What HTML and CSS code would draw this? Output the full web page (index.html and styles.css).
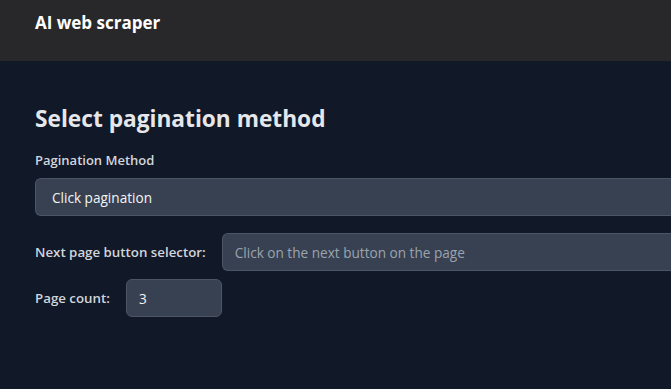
FILE: index.html
```html
<!DOCTYPE html>
<html lang="en">
<head>
<meta charset="utf-8">
<title>AI web scraper</title>
<link rel="stylesheet" href="styles.css">
</head>
<body>
<header class="topbar">
  <h1 class="brand">AI web scraper</h1>
</header>
<main class="content">
  <h2 class="section-title">Select pagination method</h2>
  <div class="field">
    <label class="field-label" for="method">Pagination Method</label>
    <div class="select" id="method">Click pagination</div>
  </div>
  <div class="row">
    <label class="row-label" for="next">Next page button selector:</label>
    <input id="next" class="input input-wide" type="text" placeholder="Click on the next button on the page">
  </div>
  <div class="row">
    <label class="row-label" for="count">Page count:</label>
    <input id="count" class="input input-small" type="text" value="3">
  </div>
</main>
</body>
</html>
```
FILE: styles.css
```css
* { box-sizing: border-box; }
html, body { margin: 0; padding: 0; }
body {
  background: #111827;
  font-family: "Open Sans", "Noto Sans", sans-serif;
  color: #e5e7eb;
  overflow: hidden;
  width: 671px;
  height: 389px;
}
.topbar {
  background: #28282b;
  height: 61px;
  padding: 11px 35px 0;
}
.brand {
  margin: 0;
  font-size: 17px;
  font-weight: 700;
  color: #ffffff;
  line-height: 24px;
}
.content {
  padding: 42px 0 0 35px;
}
.section-title {
  margin: 0 0 16px;
  font-size: 22.7px;
  font-weight: 700;
  color: #e5e7eb;
  line-height: 32px;
}
.field-label {
  display: block;
  font-size: 13px;
  font-weight: 600;
  color: #d1d5db;
  line-height: 18px;
  margin-bottom: 9px;
}
.select {
  height: 38px;
  background: #374151;
  border: 1px solid #4b5563;
  border-right: none;
  border-radius: 6px 0 0 6px;
  padding: 0 16px;
  display: flex;
  align-items: center;
  font-size: 13.6px;
  color: #f3f4f6;
}
.field { margin-bottom: 17px; }
.row {
  display: flex;
  align-items: center;
  gap: 16px;
  margin-bottom: 8px;
}
.row-label {
  font-size: 13.3px;
  font-weight: 600;
  color: #d1d5db;
  white-space: nowrap;
}
.input {
  height: 38px;
  background: #374151;
  border: 1px solid #4b5563;
  border-radius: 6px;
  padding: 0 12px;
  font-family: inherit;
  font-size: 13.6px;
  color: #f3f4f6;
  outline: none;
}
.input::placeholder { color: #9ca3af; }
.input-wide {
  flex: 1;
  min-width: 0;
  border-right: none;
  border-radius: 6px 0 0 6px;
}
.input-small { width: 96px; flex: none; }
```
